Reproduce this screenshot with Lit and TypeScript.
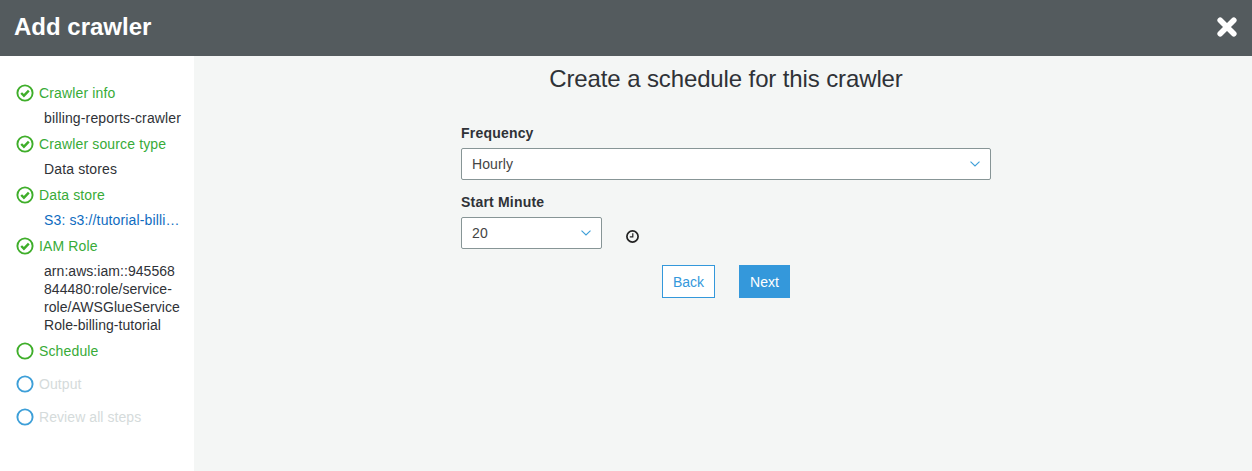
import { LitElement, html, css, svg } from "lit";
import { customElement } from "lit/decorators.js";

const check = svg`<path d="M6.2 10 L8.9 12.7 L13.8 7.6" fill="none" stroke="#3fae2a" stroke-width="2.4"/>`;
const circle = (color: string, done: boolean) => html`<svg class="ic" width="20" height="20" viewBox="0 0 20 20"><circle cx="10" cy="10" r="7.6" fill="none" stroke=${color} stroke-width="1.9"/>${done ? check : ""}</svg>`;
const chev = html`<svg class="chev" width="10" height="6" viewBox="0 0 10 6"><path d="M0.5 0.7 L5 5 L9.5 0.7" fill="none" stroke="#3d9fd8" stroke-width="1.1"/></svg>`;

@customElement("app-root")
export class AppRoot extends LitElement {
  static styles = css`
    :host { display: block; width: 1252px; height: 471px; overflow: hidden; font-family: "Liberation Sans", Arial, sans-serif; font-size: 14px; color: #2f3237; }
    * { box-sizing: border-box; }
    .head { height: 56px; background: #545b5e; color: #fff; display: flex; align-items: center; justify-content: space-between; padding: 0 14px 3px; }
    .head h1 { margin: 0; font-size: 24px; font-weight: 700; }
    .x { display: block; }
    .body { display: flex; height: 415px; }
    .side { width: 194px; background: #fff; padding: 27px 0 0 15px; flex: none; letter-spacing: 0.14px; }
    .step { display: flex; align-items: center; gap: 4px; height: 20px; color: #38ab38; line-height: 20px; }
    .step.off { color: #d5dbdb; letter-spacing: 0.07px; }
    .sub { margin: 6px 0 7px 29px; line-height: 18px; width: 137.6px; overflow-wrap: break-word; }
    .sub.link { color: #0f6cbf; white-space: nowrap; overflow: hidden; text-overflow: ellipsis; }
    .sub.multi { letter-spacing: 0.05px; }
    .gap13 { margin-top: 13px; }
    .main { flex: 1; background: #f4f6f5; display: flex; flex-direction: column; align-items: center; padding-left: 6px; }
    .main h2 { margin: 8px 0 0; font-size: 24px; font-weight: 400; line-height: 30px; height: 30px; letter-spacing: -0.12px; }
    .form { width: 530px; margin-top: 29px; }
    label { display: block; font-weight: 700; line-height: 20px; margin-bottom: 5px; letter-spacing: 0.2px; }
    .sel { height: 32px; background: #fff; border: 1px solid #879596; border-radius: 2px; display: flex; align-items: center; justify-content: space-between; padding: 0 10px; color: #444; letter-spacing: 0.1px; }
    .row { display: flex; align-items: center; gap: 23px; margin-bottom: 16px; }
    .row .sel { width: 141px; }
    .clock { margin-top: 6px; display: block; }
    .mt { margin-top: 12px; }
    .btns { display: flex; justify-content: center; gap: 24px; }
    .btn { height: 33px; display: flex; align-items: center; justify-content: center; border: 1px solid #3498db; }
    .back { width: 53px; background: #fff; color: #3498db; }
    .next { width: 51px; background: #3498db; color: #fff; }
  `;
  render() {
    return html`
      <div class="head"><h1>Add crawler</h1>
        <svg class="x" width="22" height="22" viewBox="0 0 22 22"><path d="M4.2 4.2 L17.8 17.8 M17.8 4.2 L4.2 17.8" stroke="#fff" stroke-width="5.6" stroke-linecap="round"/></svg>
      </div>
      <div class="body">
        <div class="side">
          <div class="step">${circle("#3fae2a", true)}Crawler info</div>
          <div class="sub">billing-reports-crawler</div>
          <div class="step">${circle("#3fae2a", true)}Crawler source type</div>
          <div class="sub">Data stores</div>
          <div class="step">${circle("#3fae2a", true)}Data store</div>
          <div class="sub link">S3: s3://tutorial-billing-reports</div>
          <div class="step">${circle("#3fae2a", true)}IAM Role</div>
          <div class="sub multi">arn:aws:iam::945568844480:role/service-role/AWSGlueServiceRole-billing-tutorial</div>
          <div class="step">${circle("#3fae2a", false)}Schedule</div>
          <div class="step off gap13">${circle("#3d9fd8", false)}Output</div>
          <div class="step off gap13">${circle("#3d9fd8", false)}Review all steps</div>
        </div>
        <div class="main">
          <h2>Create a schedule for this crawler</h2>
          <div class="form">
            <label>Frequency</label>
            <div class="sel">Hourly ${chev}</div>
            <label class="mt">Start Minute</label>
            <div class="row">
              <div class="sel">20 ${chev}</div>
              <svg class="clock" width="15" height="15" viewBox="0 0 15 15"><circle cx="7.5" cy="7.5" r="5.6" fill="none" stroke="#222" stroke-width="1.7"/><path d="M7.8 4.2 V7.9 H4.8" fill="none" stroke="#222" stroke-width="1.2"/></svg>
            </div>
            <div class="btns"><div class="btn back">Back</div><div class="btn next">Next</div></div>
          </div>
        </div>
      </div>`;
  }
}
